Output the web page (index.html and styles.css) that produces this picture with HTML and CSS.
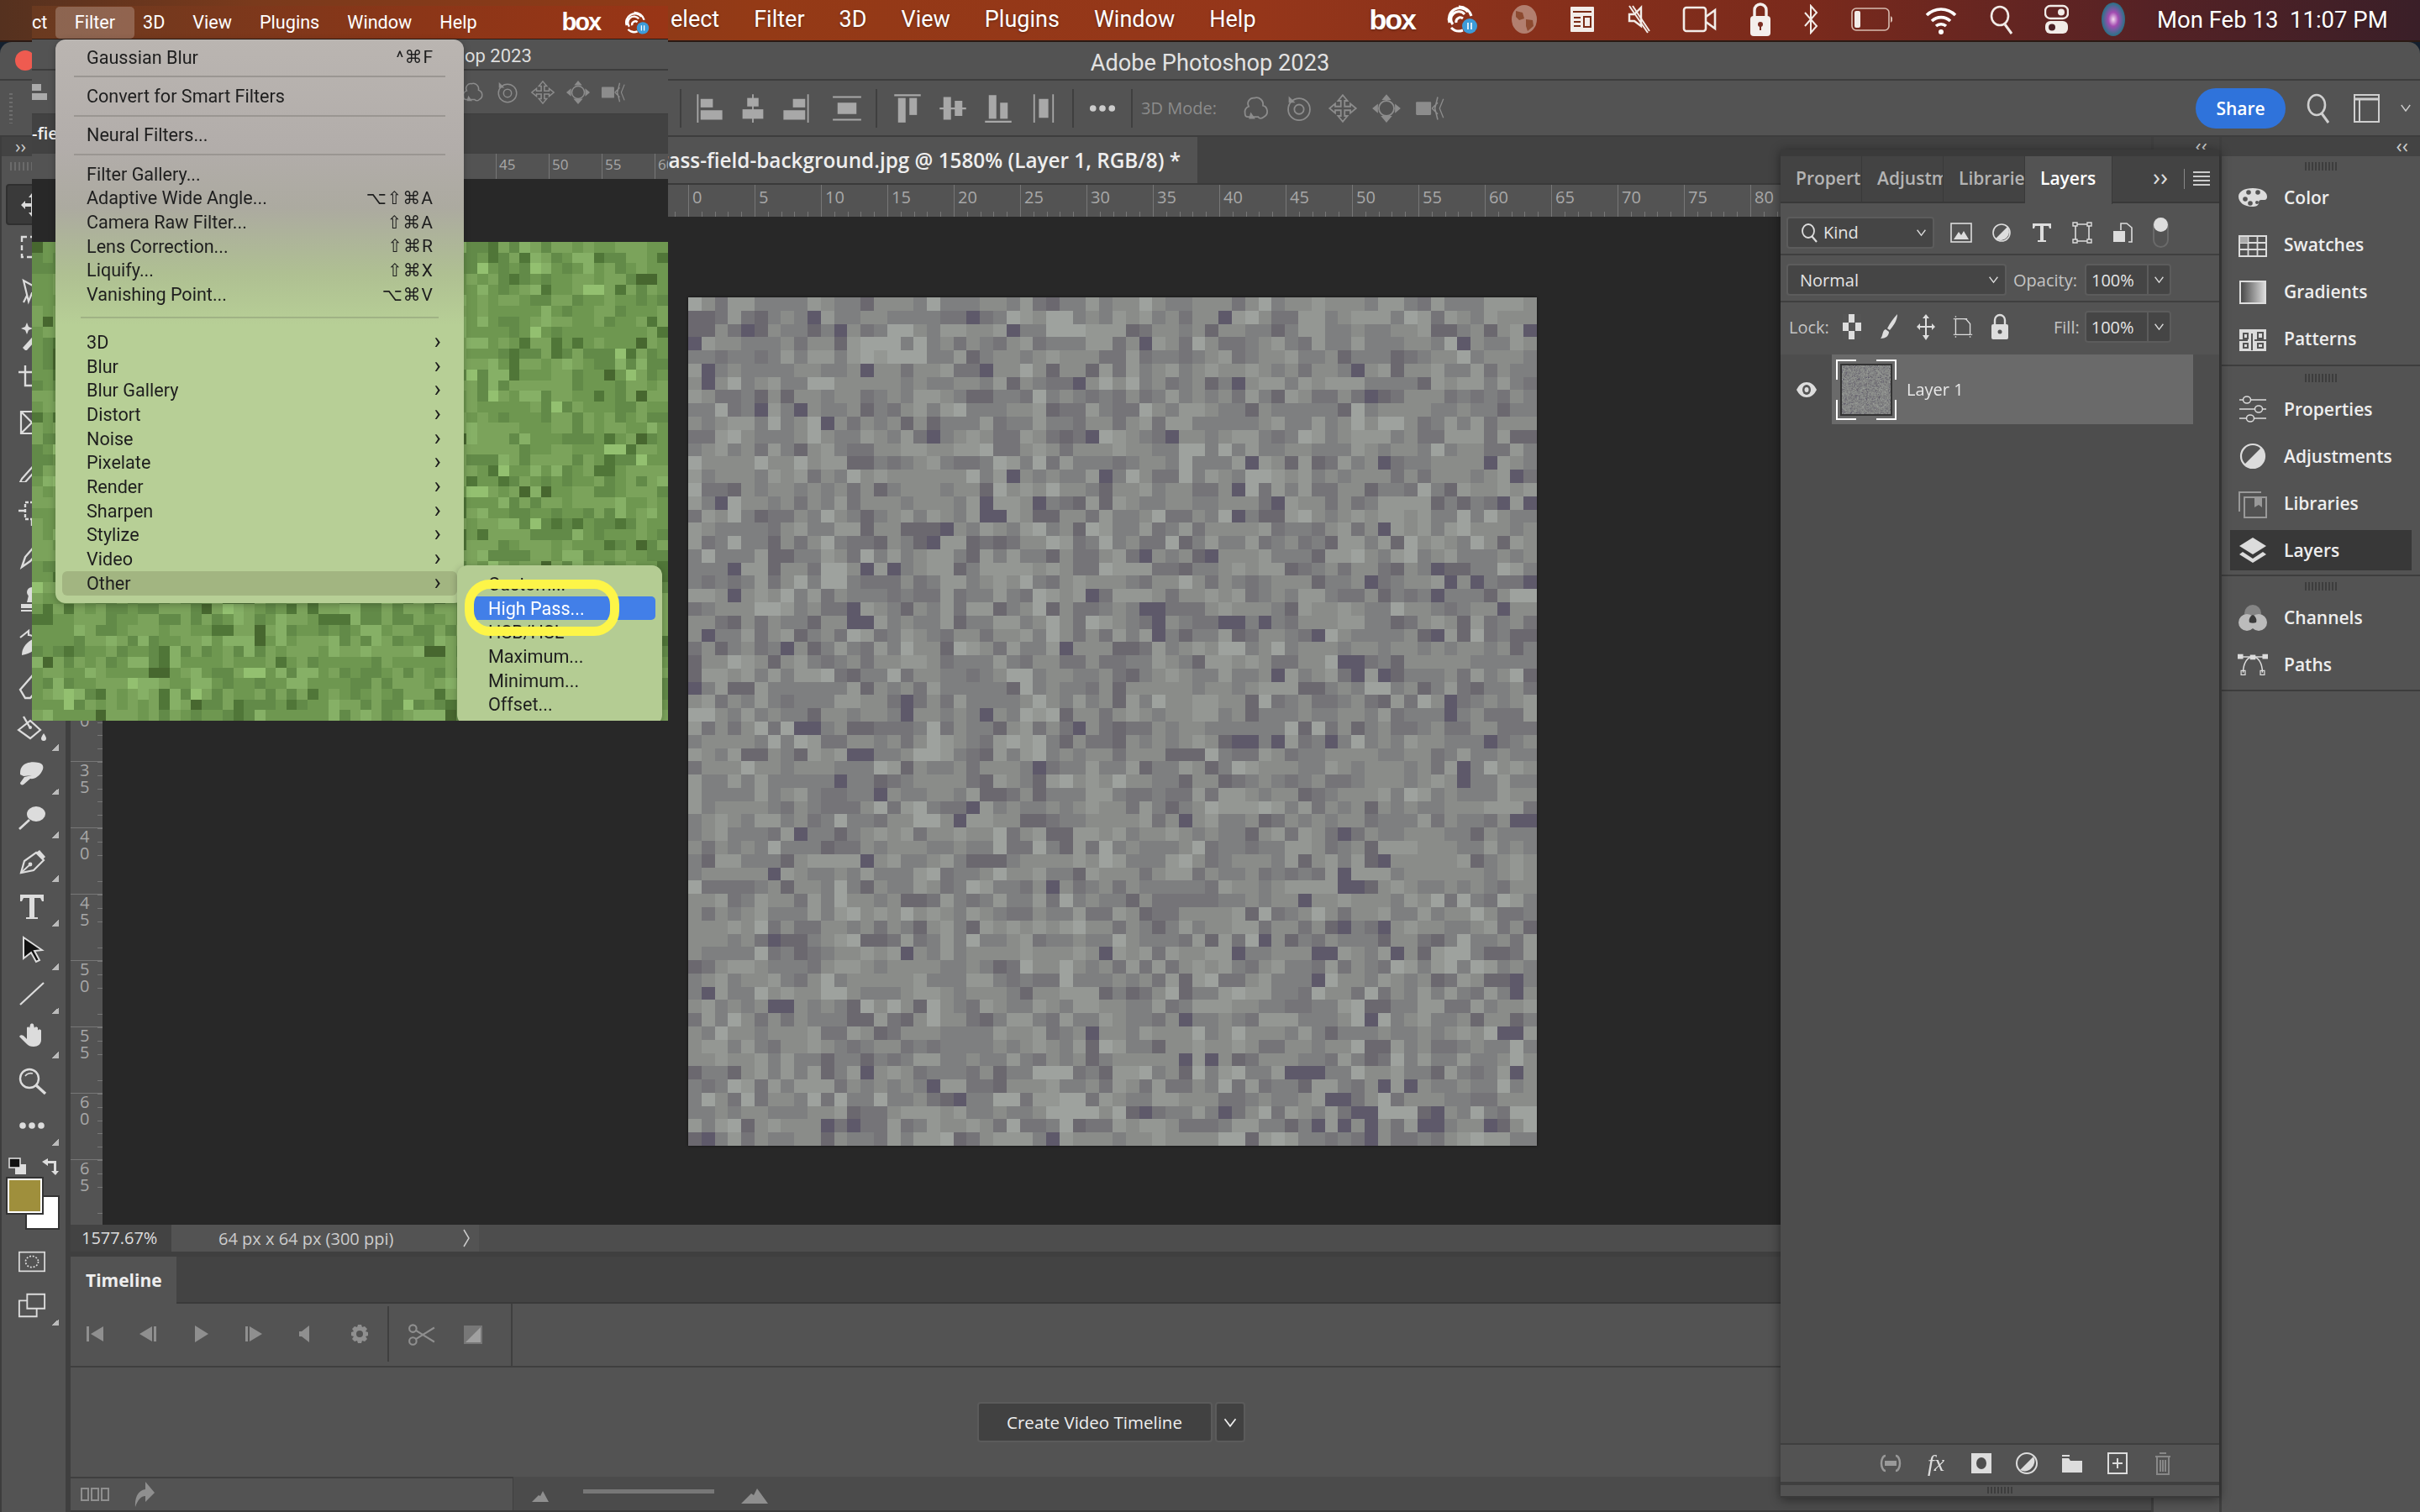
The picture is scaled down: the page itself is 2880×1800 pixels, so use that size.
FILE: index.html
```html
<!DOCTYPE html>
<html lang="en">
<head>
    <meta charset="UTF-8" />
    <title>Adobe Photoshop 2023</title>
    <link rel="stylesheet" href="styles.css">
</head>
<body>
    <svg class="defs">
        <symbol id="chev" viewBox="0 0 16 12"><path d="M2 2l6 8 6-8" fill="none" stroke="currentColor" stroke-width="1.6"/></symbol>
        <symbol id="orbit" viewBox="0 0 32 32"><path d="M15 5a7 7 0 0 1 9 8 6.5 6.5 0 0 1 1 12c-2 2-5 2-6 0H8c-2 0-3-2-3-4a6 6 0 0 1 4-7 6 6 0 0 1 6-9z" fill="none" stroke="currentColor" stroke-width="1.6"/><path d="M9 27l2-7 5 7z" fill="currentColor"/></symbol>
        <symbol id="roll" viewBox="0 0 32 32"><circle cx="16" cy="17" r="11.5" fill="none" stroke="currentColor" stroke-width="1.6"/><circle cx="16" cy="17" r="5" fill="none" stroke="currentColor" stroke-width="1.6"/><path d="M5 3v7h7z" fill="currentColor"/></symbol>
        <symbol id="pan" viewBox="0 0 32 32"><path d="M16 2l5 6h-3v6h6v-3l6 5-6 5v-3h-6v6h3l-5 6-5-6h3v-6H8v3l-6-5 6-5v3h6V8h-3z" fill="none" stroke="currentColor" stroke-width="1.6"/></symbol>
        <symbol id="slide" viewBox="0 0 32 32"><path d="M16 1l5 6H11zM16 31l-6-7h12zM1 16l6-5v10zM31 16l-6-5v10z" fill="currentColor"/><circle cx="16" cy="16" r="8" fill="none" stroke="currentColor" stroke-width="1.6"/></symbol>
        <symbol id="cam3d" viewBox="0 0 32 32"><rect x="1" y="9" width="16" height="14" rx="1" fill="currentColor"/><path d="M18 16l6-6M18 16l6 6M24 4l-3 12 3 12" fill="none" stroke="currentColor" stroke-width="1.4"/><path d="M30 6l-4 10 4 10" fill="none" stroke="currentColor" stroke-width="1.2"/></symbol>
    </svg>

    <div class="menubar">
        <span>elect</span>
        <span>Filter</span>
        <span>3D</span>
        <span>View</span>
        <span>Plugins</span>
        <span>Window</span>
        <span>Help</span>
        <div class="tray">
            <span class="boxlogo">box</span>
            <svg class="tray-sync" viewBox="0 0 40 36"><path d="M6 22a13 13 0 0 1 22-13M10 24a9 9 0 0 1 14-12M17 3a15 15 0 0 1 15 11" fill="none" stroke="#fff" stroke-width="3"/><path d="M14 22a5 5 0 0 1 8-5M8 28c4 4 9 5 14 3" fill="none" stroke="#fff" stroke-width="3"/><circle cx="30" cy="26" r="9" fill="#3d9bd8"/><path d="M28 22v8M32 22v8" stroke="#fff" stroke-width="1.6"/></svg>
            <svg class="tray-globe" viewBox="0 0 32 36"><ellipse cx="16" cy="18" rx="15" ry="17" fill="#c09a8c" opacity=".75"/><path d="M6 8l8 2 2 7-6 2-4-4zM18 18l8 1 1 7-7 6-2-6z" fill="#8c4a30"/></svg>
            <svg class="tray-kb" viewBox="0 0 30 36"><path d="M2 3h26a1 1 0 0 1 1 1v28a1 1 0 0 1-1 1H2a1 1 0 0 1-1-1V4a1 1 0 0 1 1-1z" fill="#f2ece8"/><path d="M4 9h22M5 16h8M5 21h8M5 26h8" stroke="#7a2c16" stroke-width="2"/><path d="M17 15h8v12h-8z" fill="none" stroke="#7a2c16" stroke-width="2"/></svg>
            <svg class="tray-mute" viewBox="0 0 27 36"><path d="M2 12h6l8-8v22l-8-6H2z" fill="none" stroke="#f2ece8" stroke-width="2.4"/><path d="M2 2l22 32M6 2l20 30" stroke="#f2ece8" stroke-width="2"/></svg>
            <svg class="tray-cam" viewBox="0 0 41 36"><rect x="2" y="4" width="26" height="28" rx="3" fill="none" stroke="#f2ece8" stroke-width="2.6"/><path d="M28 15l11-8v22l-11-8" fill="none" stroke="#f2ece8" stroke-width="2.6"/></svg>
            <svg class="tray-lock" viewBox="0 0 26 42"><path d="M6 18v-8a7 7 0 0 1 14 0v8" fill="none" stroke="#f4efec" stroke-width="3.4"/><rect x="1" y="17" width="24" height="24" rx="4" fill="#f4efec"/><circle cx="13" cy="27" r="3" fill="#7a2c20"/><path d="M12 28h2v6h-2z" fill="#7a2c20"/></svg>
            <svg class="tray-bt" viewBox="0 0 18 36"><path d="M2 10l14 16-7 8V2l7 8L2 26" fill="none" stroke="#f2ece8" stroke-width="2"/></svg>
            <svg class="tray-batt" viewBox="0 0 50 36"><rect x="1" y="5" width="44" height="26" rx="5" fill="none" stroke="#d8bcb0" stroke-width="1.6"/><rect x="4" y="8" width="7" height="20" rx="2" fill="#f2ece8"/><path d="M47 14v8l2-2v-4z" fill="#d8bcb0"/></svg>
            <svg class="tray-wifi" viewBox="0 0 38 36"><path d="M2 13a24 24 0 0 1 34 0M8 20a16 16 0 0 1 22 0M13 26a9 9 0 0 1 12 0" fill="none" stroke="#fff" stroke-width="3.6"/><circle cx="19" cy="33" r="3" fill="#fff"/></svg>
            <svg class="tray-search" viewBox="0 0 27 36"><ellipse cx="12" cy="14" rx="10" ry="11" fill="none" stroke="#f2ece8" stroke-width="2.6"/><path d="M18 24l8 11" stroke="#f2ece8" stroke-width="3"/></svg>
            <svg class="tray-ctl" viewBox="0 0 29 36"><rect x="1" y="2" width="27" height="15" rx="6" fill="none" stroke="#f2ece8" stroke-width="2.4"/><circle cx="20" cy="9.5" r="4" fill="#f2ece8"/><rect x="1" y="20" width="27" height="15" rx="6" fill="#f2ece8"/><circle cx="9" cy="27.5" r="4" fill="#4a2024"/></svg>
            <span class="siri"></span>
            <span class="clock">Mon Feb 13&nbsp; 11:07 PM</span>
        </div>
    </div>

    <div class="window">
        <div class="titlebar">
            <span class="light"></span>
            <span class="apptitle">Adobe Photoshop 2023</span>
        </div>

        <div class="optbar">
            <div class="optgrip"></div>
            <div class="optgroup g1">
                <svg class="opt" viewBox="0 0 32 32"><path d="M3 1v30" stroke="currentColor" stroke-width="1.6"/><rect x="6" y="6" width="13" height="9" fill="currentColor"/><rect x="6" y="18" width="23" height="10" fill="currentColor"/></svg>
                <svg class="opt" viewBox="0 0 32 32"><path d="M16 1v30" stroke="currentColor" stroke-width="1.6"/><rect x="10" y="5" width="12" height="9" fill="currentColor"/><rect x="5" y="17" width="22" height="10" fill="currentColor"/></svg>
                <svg class="opt" viewBox="0 0 32 32"><path d="M29 1v30" stroke="currentColor" stroke-width="1.6"/><rect x="13" y="6" width="13" height="9" fill="currentColor"/><rect x="3" y="18" width="23" height="10" fill="currentColor"/></svg>
                <svg class="opt last" viewBox="0 0 32 32"><path d="M1 4h30M1 28h30" stroke="currentColor" stroke-width="1.6"/><rect x="6" y="10" width="20" height="12" fill="currentColor"/></svg>
            </div>
            <div class="optgroup g2">
                <svg class="opt" viewBox="0 0 32 32"><path d="M2 2h28" stroke="currentColor" stroke-width="2"/><rect x="6" y="5" width="8" height="26" fill="currentColor"/><rect x="18" y="5" width="8" height="18" fill="currentColor"/></svg>
                <svg class="opt" viewBox="0 0 32 32"><path d="M2 16h28" stroke="currentColor" stroke-width="2"/><rect x="6" y="4" width="8" height="24" fill="currentColor"/><rect x="18" y="8" width="8" height="16" fill="currentColor"/></svg>
                <svg class="opt" viewBox="0 0 32 32"><path d="M2 30h28" stroke="currentColor" stroke-width="2"/><rect x="6" y="2" width="8" height="25" fill="currentColor"/><rect x="18" y="10" width="8" height="17" fill="currentColor"/></svg>
                <svg class="opt" viewBox="0 0 32 32"><path d="M6 1v30M26 1v30" stroke="currentColor" stroke-width="1.6"/><rect x="11" y="6" width="10" height="20" fill="currentColor"/></svg>
            </div>
            <div class="optgroup g3">
                <svg class="opt dots" viewBox="0 0 32 32"><circle cx="6" cy="16" r="3.4"/><circle cx="16" cy="16" r="3.4"/><circle cx="26" cy="16" r="3.4"/></svg>
            </div>
            <div class="optgroup g4">
                <span class="mode3d">3D Mode:</span>
                <svg class="opt dim"><use href="#orbit"/></svg>
                <svg class="opt dim"><use href="#roll"/></svg>
                <svg class="opt dim"><use href="#pan"/></svg>
                <svg class="opt dim"><use href="#slide"/></svg>
                <svg class="opt dim"><use href="#cam3d"/></svg>
            </div>
            <div class="optright">
                <span class="share">Share</span>
                <svg class="opt-search" viewBox="0 0 27 36"><ellipse cx="12" cy="14" rx="10" ry="12" fill="none" stroke="#cfcfcf" stroke-width="2.6"/><path d="M18 24l8 11" stroke="#cfcfcf" stroke-width="3"/></svg>
                <svg class="opt-work" viewBox="0 0 31 36"><rect x="1" y="2" width="29" height="32" fill="none" stroke="#cfcfcf" stroke-width="2"/><path d="M1 7h29" stroke="#cfcfcf" stroke-width="3"/><path d="M7 8v26" stroke="#cfcfcf" stroke-width="2"/></svg>
                <svg class="opt-chev"><use href="#chev"/></svg>
            </div>
        </div>

        <div class="mainrow">
            <div class="tools">
                <div class="toolhead">››</div>
                <div class="grip"></div>
                <div class="tool on"><svg viewBox="0 0 36 36"><path d="M18 4l4 5h-3v7h7v-3l5 5-5 5v-3h-7v7h3l-4 5-4-5h3v-7h-7v3l-5-5 5-5v3h7V9h-3z"/></svg></div>
                <div class="tool"><svg viewBox="0 0 36 36"><path d="M6 6h24v24H6z" fill="none" stroke="currentColor" stroke-width="2.4" stroke-dasharray="6 4"/></svg></div>
                <div class="tool"><svg viewBox="0 0 36 36"><path d="M8 6l22 12-12 3-4 10zM12 24l-4 8" fill="none" stroke="currentColor" stroke-width="2.2"/></svg></div>
                <div class="tool"><svg viewBox="0 0 36 36"><path d="M7 33l18-20 4 4-18 20z"/><path d="M12 3l2 5 5 2-5 2-2 5-2-5-5-2 5-2z"/></svg></div>
                <div class="tool"><svg viewBox="0 0 36 36"><path d="M10 2v24h24M2 10h24v24" fill="none" stroke="currentColor" stroke-width="2.4"/></svg></div>
                <div class="tool"><svg viewBox="0 0 36 36"><path d="M5 5h26v26H5zM5 5l26 26M31 5L5 31" fill="none" stroke="currentColor" stroke-width="2.2"/></svg></div>
                <div class="tool"><svg viewBox="0 0 36 36"><path d="M6 32l16-18 4 4-16 18-6 0zM24 8l4-4 6 6-4 4z" fill="none" stroke="currentColor" stroke-width="2.2"/></svg></div>
                <div class="tool"><svg viewBox="0 0 36 36"><path d="M10 8h16v20H10z" fill="none" stroke="currentColor" stroke-width="2.4" stroke-dasharray="4 2"/><path d="M2 18h8M18 28v8" stroke="currentColor" stroke-width="2.4"/></svg></div>
                <div class="tool"><svg viewBox="0 0 36 36"><path d="M6 33l4-12 14-16 6 5-14 16z" fill="none" stroke="currentColor" stroke-width="2.4"/></svg></div>
                <div class="tool"><svg viewBox="0 0 36 36"><circle cx="18" cy="10" r="6"/><path d="M14 14h8l2 8H12zM5 24h26v5H5zM5 31h26v2H5z"/></svg></div>
                <div class="tool"><svg viewBox="0 0 36 36"><path d="M6 33c0-10 6-16 18-22l2 6c-2 8-8 14-20 16z"/><path d="M4 12l10-8v5c4 0 6 2 7 4" fill="none" stroke="currentColor" stroke-width="2.2"/></svg></div>
                <div class="tool"><svg viewBox="0 0 36 36"><path d="M4 22L18 6l12 10-14 16H10z" fill="none" stroke="currentColor" stroke-width="2.4"/></svg></div>
                <!-- from here the tools show in full, under the pasted menu -->
                <div class="tool more"><svg viewBox="0 0 36 36"><path d="M2 18L16 7l12 11-12 10z" fill="none" stroke="currentColor" stroke-width="2.2"/><path d="M8 2l7 12" stroke="currentColor" stroke-width="2.4"/><circle cx="16" cy="15" r="2"/><path d="M32 22c2 3 3 5 3 6a3 3 0 0 1-6 0c0-1 1-3 3-6z"/></svg></div>
                <div class="tool more"><svg viewBox="0 0 36 36"><path d="M6 9c3-5 12-7 20-5 5 1 7 5 4 10-3 6-9 10-14 9l-8 7c-2 1-4 0-4-2l5-7 9-2-10 1-4-2c0-4 0-6 2-9z"/></svg></div>
                <div class="tool more"><svg viewBox="0 0 36 36"><ellipse cx="23" cy="13" rx="11" ry="9"/><path d="M15 20L3 31" stroke="currentColor" stroke-width="2.8"/></svg></div>
                <div class="tool more"><svg viewBox="0 0 36 36"><path d="M5 31l4-14L23 7l9 9-12 12z" fill="none" stroke="currentColor" stroke-width="2.2"/><path d="M23 7l4-3 7 8-3 3z"/><path d="M5 31l11-10" stroke="currentColor" stroke-width="1.8"/><circle cx="16" cy="21" r="2.4"/></svg></div>
                <div class="tool more"><svg viewBox="0 0 36 36"><path d="M4 4h28v8h-2l-2-4h-7v23h4v2H11v-2h4V8H8l-2 4H4z"/></svg></div>
                <div class="tool more"><svg viewBox="0 0 36 36"><path d="M8 3l22 15-9 1 6 11-4 2-6-11-9 7z" fill="#111" stroke="#ddd" stroke-width="2"/></svg></div>
                <div class="tool more"><svg viewBox="0 0 36 36"><path d="M4 31L32 5" stroke="currentColor" stroke-width="2.2"/></svg></div>
                <div class="tool more"><svg viewBox="0 0 36 36"><path d="M12 26L3 17c1-2 3-2 5-1l4 4 0-13c0-2 3-2 3 0l1-4c0-2 4-2 4 0l1 4c0-2 4-2 4 0v3c0-2 4-2 4 0v11c0 5-4 8-9 8-4 0-6-1-8-3z"/></svg></div>
                <div class="tool"><svg viewBox="0 0 36 36"><circle cx="15" cy="14" r="11" fill="none" stroke="currentColor" stroke-width="2.4"/><path d="M10 11c2-3 6-4 9-3" fill="none" stroke="currentColor" stroke-width="1.6"/><path d="M23 22l11 10" stroke="currentColor" stroke-width="3.4"/></svg></div>
                <div class="tool more"><svg viewBox="0 0 36 36"><circle cx="7" cy="18" r="3.8"/><circle cx="18" cy="18" r="3.8"/><circle cx="29" cy="18" r="3.8"/></svg></div>
                <div class="colors-mini">
                    <svg viewBox="0 0 22 22" class="mini-default"><rect x="8" y="9" width="13" height="12" fill="#ddd"/><rect x="1" y="2" width="13" height="11" fill="#111" stroke="#ddd" stroke-width="1.6"/></svg>
                    <svg viewBox="0 0 22 22" class="mini-swap"><path d="M2 6l7-4v3h10v12h3l-4 5-5-5h3V8H9v3z" fill="#ddd"/></svg>
                </div>
                <div class="swatches">
                    <span class="bgcolor"></span>
                    <span class="fgcolor"></span>
                </div>
                <div class="tool short"><svg viewBox="0 0 36 36" class="wide"><rect x="2" y="6" width="32" height="24" fill="none" stroke="currentColor" stroke-width="1.8"/><ellipse cx="18" cy="18" rx="8" ry="7" fill="none" stroke="currentColor" stroke-width="1.8" stroke-dasharray="2 2"/></svg></div>
                <div class="tool short more"><svg viewBox="0 0 36 36" class="wide"><path d="M12 4h22v18H12z" fill="none" stroke="currentColor" stroke-width="2"/><path d="M12 12H2v20h22v-10" fill="none" stroke="currentColor" stroke-width="2"/></svg></div>
            </div>

            <div class="center">
                <div class="tabbar">
                    <div class="doctab">grass-field-background.jpg @ 1580% (Layer 1, RGB/8) *</div>
                </div>
                <div class="hruler">
                    <span>0</span><span>5</span><span>10</span><span>15</span><span>20</span><span>25</span><span>30</span><span>35</span><span>40</span><span>45</span><span>50</span><span>55</span><span>60</span><span>65</span><span>70</span><span>75</span><span>80</span>
                </div>
                <div class="workspace">
                    <div class="vruler">
                        <span>0</span><span>5</span><span>1<br>0</span><span>1<br>5</span><span>2<br>0</span><span>2<br>5</span><span>3<br>0</span><span>3<br>5</span><span>4<br>0</span><span>4<br>5</span><span>5<br>0</span><span>5<br>5</span><span>6<br>0</span><span>6<br>5</span>
                    </div>
                    <div class="pasteboard">
                        <canvas class="image" id="image" width="64" height="64"></canvas>
                    </div>
                </div>
                <div class="statusbar">
                    <span class="zoomval">1577.67%</span>
                    <div class="docinfo">
                        <span>64 px x 64 px (300 ppi)</span>
                        <svg viewBox="0 0 10 24"><path d="M2 2l6 10-6 10" fill="none" stroke="#ccc" stroke-width="1.5"/></svg>
                    </div>
                </div>
                <div class="timeline">
                    <div class="tl-tabs"><span class="tl-tab">Timeline</span></div>
                    <div class="tl-controls">
                        <div class="tl-group">
                            <svg viewBox="0 0 24 24"><path d="M2 3h3v18H2zM22 3v18L7 12z"/></svg>
                            <svg viewBox="0 0 24 24"><path d="M17 3v18L2 12zM19 3h3v18h-3z"/></svg>
                            <svg viewBox="0 0 24 24"><path d="M5 2l16 10L5 22z"/></svg>
                            <svg viewBox="0 0 24 24"><path d="M2 3h3v18H2zM7 3l15 9-15 9z"/></svg>
                            <svg viewBox="0 0 24 24"><path d="M6 9l9-7v20l-9-7H3V9z"/></svg>
                            <svg viewBox="0 0 24 24"><path d="M10 1h4l1 3 3-1 3 3-2 3 3 1v4l-3 1 2 3-3 3-3-1-1 3h-4l-1-3-3 1-3-3 2-3-3-1v-4l3-1-2-3 3-3 3 1zM12 8a4 4 0 1 0 0 8 4 4 0 0 0 0-8z" fill-rule="evenodd"/></svg>
                        </div>
                        <div class="tl-group second">
                            <svg viewBox="0 0 32 24"><circle cx="6" cy="5" r="4" fill="none" stroke="currentColor" stroke-width="2"/><circle cx="6" cy="19" r="4" fill="none" stroke="currentColor" stroke-width="2"/><path d="M9 7l21 13M9 17L30 4" stroke="currentColor" stroke-width="2"/></svg>
                            <svg viewBox="0 0 24 24"><path d="M1 1h22v22H1z" fill="#777"/><path d="M21 3v18H3z" fill="#a0a0a0"/></svg>
                        </div>
                    </div>
                    <div class="tl-body">
                        <span class="tl-button">Create Video Timeline</span>
                        <span class="tl-arrow"><svg><use href="#chev"/></svg></span>
                    </div>
                    <div class="tl-footer">
                        <div class="tl-foot-left">
                            <span class="framebox"></span><span class="framebox"></span><span class="framebox"></span>
                            <svg class="tl-share" viewBox="0 0 26 32"><path d="M14 1l11 13-11 11v-7C9 18 5 22 2 31c-1-12 4-20 12-21z"/></svg>
                        </div>
                        <div class="tl-foot-right">
                            <svg class="mount small" viewBox="0 0 20 14"><path d="M0 14L8 6l2 1 3-6 7 13z"/></svg>
                            <span class="slider"></span>
                            <svg class="mount big" viewBox="0 0 32 18"><path d="M0 18L12 6l3 2 4-8 13 18z"/></svg>
                        </div>
                    </div>
                </div>
            </div>

            <div class="dockmid">
                <div class="dockhead">‹‹</div>
            </div>

            <div class="dock">
                <div class="dockhead">‹‹</div>
                <div class="dockgroup g-a">
                    <div class="grip short"></div>
                    <div class="dockitem"><svg viewBox="0 0 36 36"><path d="M18 7c10 0 17 4 17 10 0 5-4 4-7 4-2 0-3 1-3 3 0 4-3 5-8 5C8 29 1 24 1 17 1 11 8 7 18 7z"/><g fill="#535353"><circle cx="9" cy="20" r="2.8"/><circle cx="15" cy="25" r="2.8"/><circle cx="24" cy="12" r="2.8"/><circle cx="13" cy="12" r="2.8"/><circle cx="23" cy="24" r="2"/></g></svg><span>Color</span></div>
                    <div class="dockitem"><svg viewBox="0 0 36 36"><path d="M2 8h32v24H2z" fill="none" stroke="currentColor" stroke-width="2"/><path d="M12.5 8v24M23.5 8v24M2 16h32M2 24h32" stroke="currentColor" stroke-width="1.8"/><rect x="3" y="9" width="9" height="7" fill="#aaa"/></svg><span>Swatches</span></div>
                    <div class="dockitem"><svg viewBox="0 0 36 36"><defs><linearGradient id="grad"><stop offset="0" stop-color="#444"/><stop offset="1" stop-color="#ddd"/></linearGradient></defs><rect x="3" y="6" width="30" height="26" fill="url(#grad)" stroke="#ddd" stroke-width="2"/></svg><span>Gradients</span></div>
                    <div class="dockitem"><svg viewBox="0 0 36 36"><rect x="2" y="7" width="32" height="26"/><path d="M7 12h5v6H7zM17 12v20M24 11h6v7h-6zM7 24h5v5H7zM24 24h6v5h-6zM2 20h10M20 20h14" stroke="#535353" stroke-width="2" fill="none"/></svg><span>Patterns</span></div>
                </div>
                <div class="dockgroup g-b">
                    <div class="grip short"></div>
                    <div class="dockitem"><svg viewBox="0 0 36 36"><path d="M2 7h32M2 18h32M2 29h32" stroke="currentColor" stroke-width="1.5"/><g fill="#535353" stroke="currentColor" stroke-width="1.5"><ellipse cx="11" cy="7" rx="4.5" ry="4"/><ellipse cx="25" cy="18" rx="4.5" ry="4"/><ellipse cx="15" cy="29" rx="4.5" ry="4"/></g></svg><span>Properties</span></div>
                    <div class="dockitem"><svg viewBox="0 0 36 36"><circle cx="18" cy="18" r="14" fill="none" stroke="currentColor" stroke-width="2.2"/><path d="M28 8a14 14 0 0 1-20 20z"/></svg><span>Adjustments</span></div>
                    <div class="dockitem dimicon"><svg viewBox="0 0 36 36"><path d="M2 28V5h26M8 11h26v24H8z" fill="none" stroke="currentColor" stroke-width="2"/><path d="M20 11h9v12l-4-3-5 3z"/></svg><span>Libraries</span></div>
                    <div class="dockitem active"><svg viewBox="0 0 36 36"><path d="M18 3l16 10-16 10L2 13z"/><path d="M6 20l12 8 12-8 4 3-16 10L2 23z"/></svg><span>Layers</span></div>
                </div>
                <div class="dockgroup g-c">
                    <div class="grip short"></div>
                    <div class="dockitem"><svg viewBox="0 0 36 36"><circle cx="18" cy="13" r="10" fill="#858585"/><circle cx="11" cy="24" r="10" fill="#bbb"/><circle cx="25" cy="24" r="10" fill="#bbb"/><path d="M18 15c4 2 5 6 4 9a12 12 0 0 1-8 0c-1-3 0-7 4-9z" fill="#3a3a3a"/></svg><span>Channels</span></div>
                    <div class="dockitem"><svg viewBox="0 0 44 36"><path d="M8 30C8 16 14 7 22 7s14 9 14 23" fill="none" stroke="currentColor" stroke-width="1.8"/><path d="M4 7h36" stroke="currentColor" stroke-width="1.8"/><rect x="0" y="3" width="8" height="7"/><rect x="18" y="4" width="8" height="7"/><rect x="36" y="3" width="8" height="7"/><path d="M5 27h6v6H5zM33 27h6v6h-6z" fill="none" stroke="currentColor" stroke-width="1.5"/></svg><span>Paths</span></div>
                </div>
            </div>
        </div>
    </div>

    <!-- floating layers panel -->
    <div class="layers">
        <div class="layers-top"></div>
        <div class="layers-tabs">
            <span class="ltab">Properties</span>
            <span class="ltab">Adjustments</span>
            <span class="ltab">Libraries</span>
            <span class="ltab cur">Layers</span>
            <div class="ltab-end">
                <span class="more-tabs">››</span>
                <span class="ltab-bar"></span>
                <svg viewBox="0 0 20 20"><path d="M0 2h20M0 7h20M0 12h20M0 17h20" stroke="#ccc" stroke-width="2"/></svg>
            </div>
        </div>
        <div class="lrow r1">
            <div class="field kind">
                <svg class="kind-icon" viewBox="0 0 20 24"><ellipse cx="9" cy="10" rx="7" ry="8" fill="none" stroke="#ddd" stroke-width="1.8"/><path d="M13 16l6 7" stroke="#ddd" stroke-width="2.2"/></svg>
                <span>Kind</span>
                <svg class="fchev"><use href="#chev"/></svg>
            </div>
            <svg class="lic" viewBox="0 0 26 26"><rect x="1" y="2" width="24" height="22" fill="none" stroke="#ddd" stroke-width="1.6"/><path d="M4 21l6-9 3 4 3-5 6 10z" fill="#ddd"/></svg>
            <svg class="lic" viewBox="0 0 26 26"><circle cx="13" cy="13" r="10" fill="none" stroke="#ddd" stroke-width="1.6"/><path d="M20 6a10 10 0 0 1-14 14z" fill="#ddd"/></svg>
            <svg class="lic" viewBox="0 0 26 26"><path d="M2 2h22v6h-2l-1-3h-6v17h3v2H8v-2h3V5H5L4 8H2z" fill="#ddd"/></svg>
            <svg class="lic" viewBox="0 0 26 26"><path d="M5 3h16v20H5z" fill="none" stroke="#ddd" stroke-width="1.6"/><path d="M2 1h5v4H2zM19 1h5v4h-5zM2 21h5v4H2zM19 21h5v4h-5z" fill="#535353" stroke="#ddd" stroke-width="1.4"/></svg>
            <svg class="lic" viewBox="0 0 26 26"><path d="M11 10V2h7l6 5v17h-4" fill="none" stroke="#ddd" stroke-width="1.6"/><rect x="2" y="11" width="14" height="13" fill="#ddd"/></svg>
            <span class="filter-toggle"><span></span></span>
        </div>
        <div class="lrow r2">
            <div class="field blend"><span>Normal</span><svg class="fchev"><use href="#chev"/></svg></div>
            <span class="lab">Opacity:</span>
            <div class="field pct"><span>100%</span><i><svg class="fchev"><use href="#chev"/></svg></i></div>
        </div>
        <div class="lrow r3">
            <span class="lab lock">Lock:</span>
            <svg class="lk" viewBox="0 0 24 32"><rect x="1" y="1" width="22" height="30" fill="#ddd"/><path d="M1 1h7v10H1zM15 1h8v10h-8zM8 11h8v10H8zM1 21h7v10H1zM15 21h8v10h-8z" fill="#555"/></svg>
            <svg class="lk" viewBox="0 0 24 32"><path d="M22 1c0 7-4 13-9 19l-3-2C13 12 17 6 22 1zM8 19l4 3c0 5-4 8-10 8 3-3 2-10 6-11z" fill="#ddd"/></svg>
            <svg class="lk" viewBox="0 0 24 32"><path d="M12 1l4 5h-3v9h6v-3l4 4-4 4v-3h-6v9h3l-4 6-4-6h3v-9H5v3l-4-4 4-4v3h6V6H8z" fill="#ddd"/></svg>
            <svg class="lk" viewBox="0 0 28 32"><path d="M4 5h14l6 7v15H4z" fill="none" stroke="#ddd" stroke-width="1.6"/><path d="M16 5h4M1 5h2M1 27h2M25 27h2M4 1v2M4 29v2M24 29v2" stroke="#ddd" stroke-width="1.6"/></svg>
            <svg class="lk" viewBox="0 0 24 32"><path d="M6 14V8a6 6 0 0 1 12 0v6" fill="none" stroke="#ddd" stroke-width="2.4"/><rect x="2" y="13" width="20" height="18" rx="2" fill="#ddd"/><circle cx="12" cy="22" r="2.5" fill="#555"/></svg>
            <span class="lab fill">Fill:</span>
            <div class="field pct"><span>100%</span><i><svg class="fchev"><use href="#chev"/></svg></i></div>
        </div>
        <div class="layerlist">
            <div class="layerrow">
                <svg class="eye" viewBox="0 0 26 24"><path d="M1 12c3-6 7-9 12-9s9 3 12 9c-3 6-7 9-12 9S4 18 1 12z" fill="#ddd"/><ellipse cx="13" cy="12" rx="5" ry="6" fill="#555"/><ellipse cx="13" cy="12" rx="2.5" ry="3" fill="#ddd"/></svg>
                <div class="thumb">
                    <canvas id="thumb" width="62" height="62"></canvas>
                </div>
                <span class="layername">Layer 1</span>
            </div>
        </div>
        <div class="layers-foot">
            <svg viewBox="0 0 30 30"><path d="M9 6a5 9 0 0 0 0 18M21 6a5 9 0 0 1 0 18" fill="none" stroke="#999" stroke-width="2.5"/><rect x="8" y="12" width="14" height="6" fill="#999"/></svg>
            <span class="fx">fx</span>
            <svg viewBox="0 0 30 30"><rect x="3" y="3" width="24" height="24" fill="#ddd"/><ellipse cx="15" cy="15" rx="6" ry="7" fill="#4d4d4d"/></svg>
            <svg viewBox="0 0 30 30"><circle cx="15" cy="15" r="12" fill="none" stroke="#ddd" stroke-width="2"/><path d="M23 7a12 12 0 0 1-16 16z" fill="#ddd"/></svg>
            <svg viewBox="0 0 30 30"><path d="M3 9h8l2 3h14v14H3z" fill="#ddd"/><path d="M3 5h9v2H3z" fill="#ddd"/></svg>
            <svg viewBox="0 0 30 30"><path d="M4 3h22v24H4z" fill="none" stroke="#ddd" stroke-width="2"/><path d="M15 9v12M9 15h12" stroke="#ddd" stroke-width="2"/></svg>
            <svg viewBox="0 0 30 30"><path d="M6 7h18M11 3h8M8 8v20h14V8M12 11v14M15 11v14M18 11v14" fill="none" stroke="#888" stroke-width="2"/></svg>
        </div>
        <div class="layers-grip"><div class="grip short"></div></div>
    </div>

    <!-- the filter menu is a crop pasted over the left of the shot -->
    <div class="paste">
        <div class="p-menubar">
            <span class="p-ct">ct</span>
            <span class="p-filter">Filter</span>
            <span>3D</span>
            <span>View</span>
            <span>Plugins</span>
            <span>Window</span>
            <span>Help</span>
            <span class="boxlogo small">box</span>
            <svg class="p-sync" viewBox="0 0 40 36"><path d="M6 22a13 13 0 0 1 22-13M10 24a9 9 0 0 1 14-12M17 3a15 15 0 0 1 15 11" fill="none" stroke="#fff" stroke-width="3"/><path d="M14 22a5 5 0 0 1 8-5M8 28c4 4 9 5 14 3" fill="none" stroke="#fff" stroke-width="3"/><circle cx="30" cy="26" r="9" fill="#3d9bd8"/><path d="M28 22v8M32 22v8" stroke="#fff" stroke-width="1.6"/></svg>
        </div>
        <div class="p-title"><span>op 2023</span></div>
        <div class="p-opts">
            <svg class="p-first" viewBox="0 0 18 24"><rect x="0" y="2" width="11" height="8" fill="#aaa"/><rect x="0" y="13" width="18" height="8" fill="#aaa"/></svg>
            <div class="p-icons">
                <svg><use href="#orbit"/></svg>
                <svg><use href="#roll"/></svg>
                <svg><use href="#pan"/></svg>
                <svg><use href="#slide"/></svg>
                <svg><use href="#cam3d"/></svg>
            </div>
        </div>
        <div class="p-tabs"><span>-field</span></div>
        <div class="p-ruler"><span>45</span><span>50</span><span>55</span><span>60</span></div>
        <div class="p-dark"></div>
        <canvas class="grass" id="grass" width="60" height="45"></canvas>

        <div class="menu">
            <div class="mi"><span>Gaussian Blur</span><kbd>^⌘F</kbd></div>
            <hr>
            <div class="mi"><span>Convert for Smart Filters</span></div>
            <hr>
            <div class="mi"><span>Neural Filters...</span></div>
            <hr>
            <div class="mi"><span>Filter Gallery...</span></div>
            <div class="mi"><span>Adaptive Wide Angle...</span><kbd>⌥⇧⌘A</kbd></div>
            <div class="mi"><span>Camera Raw Filter...</span><kbd>⇧⌘A</kbd></div>
            <div class="mi"><span>Lens Correction...</span><kbd>⇧⌘R</kbd></div>
            <div class="mi"><span>Liquify...</span><kbd>⇧⌘X</kbd></div>
            <div class="mi"><span>Vanishing Point...</span><kbd>⌥⌘V</kbd></div>
            <hr class="wide-sep">
            <div class="mi sub"><span>3D</span><b>›</b></div>
            <div class="mi sub"><span>Blur</span><b>›</b></div>
            <div class="mi sub"><span>Blur Gallery</span><b>›</b></div>
            <div class="mi sub"><span>Distort</span><b>›</b></div>
            <div class="mi sub"><span>Noise</span><b>›</b></div>
            <div class="mi sub"><span>Pixelate</span><b>›</b></div>
            <div class="mi sub"><span>Render</span><b>›</b></div>
            <div class="mi sub"><span>Sharpen</span><b>›</b></div>
            <div class="mi sub"><span>Stylize</span><b>›</b></div>
            <div class="mi sub"><span>Video</span><b>›</b></div>
            <div class="mi sub open"><span>Other</span><b>›</b></div>
        </div>

        <div class="submenu">
            <div class="si">Custom...</div>
            <div class="si hot">High Pass...</div>
            <div class="si">HSB/HSL</div>
            <div class="si">Maximum...</div>
            <div class="si">Minimum...</div>
            <div class="si">Offset...</div>
        </div>
        <div class="ring"></div>
    </div>

    <script src="script.js"></script>
</body>
</html>
```

FILE: styles.css
```css
* {
    box-sizing: border-box;
}

html, body {
    margin: 0;
    width: 2880px;
    height: 1800px;
    overflow: hidden;
}

body {
    position: relative;
    background: #14202e;
    font-family: "Open Sans", "Liberation Sans", sans-serif;
    color: #ddd;
    display: flex;
    flex-direction: column;
}

.defs {
    display: none;
}

/* top menu bar */
.menubar {
    height: 50px;
    flex: none;
    display: flex;
    align-items: center;
    gap: 41px;
    padding-left: 798px;
    padding-bottom: 2px;
    border-bottom: 2px solid #2b1a14;
    background: linear-gradient(90deg, #55311f 0, #7a3a1c 300px, #943a16 900px, #95361a 1500px, #7a2a1c 2150px, #562225 2550px, #3a1f28 2880px);
    font-family: Roboto, sans-serif;
    font-size: 27px;
    color: #fff;
    text-shadow: 0 1px 3px rgba(0, 0, 0, 0.35);
}

.tray {
    margin-left: auto;
    margin-right: 38px;
    display: flex;
    align-items: center;
    gap: 38.5px;
    height: 44px;
}

.boxlogo {
    width: 51px;
    font-family: "Liberation Sans", sans-serif;
    font-weight: bold;
    font-size: 34px;
    letter-spacing: -2px;
    line-height: 1;
}
.boxlogo.small {
    width: 42px;
    font-size: 29px;
    margin-left: 68px;
}

.tray svg {
    height: 36px;
    flex: none;
}
.tray-sync { width: 40px; }
.tray-globe { width: 32px; }
.tray-kb { width: 30px; }
.tray-mute { width: 27px; }
.tray-cam { width: 41px; }
.tray .tray-lock { width: 26px; height: 42px; }
.tray-bt { width: 18px; }
.tray-batt { width: 50px; }
.tray-wifi { width: 38px; }
.tray-search { width: 27px; }
.tray-ctl { width: 29px; }

.siri {
    width: 28px;
    height: 40px;
    border-radius: 50%;
    background: radial-gradient(ellipse at 50% 50%, #f3d9ef 0, #a24bb0 30%, #35708c 65%, #2a4a50 100%);
}

.clock {
    width: 275px;
    white-space: nowrap;
    font-size: 27.5px;
}

/* window */
.window {
    flex: 1;
    min-height: 0;
    display: flex;
    flex-direction: column;
    background: #535353;
    border-radius: 14px 14px 0 0;
    overflow: hidden;
}

.titlebar {
    height: 46px;
    flex: none;
    display: grid;
    grid-template-columns: 1fr auto 1fr;
    align-items: center;
    padding-top: 6px;
    border-bottom: 2px solid #3d3d3d;
}
.light {
    width: 24px;
    height: 24px;
    margin: -6px 0 0 18px;
    border-radius: 50%;
    background: #ef5b50;
}
.apptitle {
    font-family: Roboto, sans-serif;
    font-size: 27.2px;
    color: #e2e2e2;
}

.optbar {
    height: 67px;
    flex: none;
    display: flex;
    align-items: center;
    border-bottom: 2px solid #3d3d3d;
    color: #a8a8a8;
}
.optgrip {
    width: 4px;
    height: 36px;
    margin-left: 11px;
    margin-right: 794px;
    background: repeating-linear-gradient(180deg, #6d6d6d 0 2px, transparent 2px 5px);
}
.optgroup {
    height: 46px;
    display: flex;
    align-items: center;
    border-left: 2px solid #3f3f3f;
}
.g1 { padding-left: 16px; gap: 15px; padding-right: 16px; }
.g1 .last { margin-left: 10px; }
.g2 { padding-left: 18px; gap: 18px; padding-right: 16px; }
.g3 { padding: 0 16px; }
.g4 { padding-left: 10px; gap: 16px; }
.opt {
    width: 36px;
    height: 36px;
    flex: none;
}
.dots {
    fill: #ccc;
}
.dim {
    color: #8c8c8c;
}
.mode3d {
    width: 100px;
    margin-right: 2px;
    font-size: 20px;
    color: #8c8c8c;
    white-space: nowrap;
}
.optright {
    margin-left: auto;
    display: flex;
    align-items: center;
    padding-right: 10px;
}
.share {
    width: 107px;
    height: 48px;
    border-radius: 24px;
    background: #2f73db;
    color: #fff;
    font-size: 21px;
    font-weight: 600;
    display: flex;
    justify-content: center;
    align-items: center;
}
.opt-search {
    width: 27px;
    height: 36px;
    margin-left: 25px;
}
.opt-work {
    width: 31px;
    height: 36px;
    margin-left: 29px;
}
.opt-chev {
    width: 14px;
    height: 11px;
    margin-left: 24px;
    color: #ccc;
}

.mainrow {
    flex: 1;
    min-height: 0;
    display: flex;
}

/* tools */
.tools {
    width: 84px;
    flex: none;
    display: flex;
    flex-direction: column;
    background: #535353;
    border-left: 2px solid #3d3d3d;
    border-right: 6px solid #3f3f3f;
}
.toolhead {
    height: 23px;
    background: #434343;
    padding-left: 16px;
    font-size: 22px;
    line-height: 20px;
    color: #ccc;
}
.grip {
    height: 10px;
    background: repeating-linear-gradient(90deg, #6b6b6b 0 2px, transparent 2px 5px);
}
.tools > .grip {
    margin: 7px 10px 13px;
    width: 30px;
}
.grip.short {
    width: 38px;
    height: 10px;
    margin: 0 auto;
    background: repeating-linear-gradient(90deg, #3d3d3d 0 2px, transparent 2px 4px);
}
.tool {
    height: 52.3px;
    flex: none;
    display: flex;
    justify-content: center;
    align-items: center;
    position: relative;
    padding-right: 4px;
}
.tool svg {
    width: 36px;
    height: 36px;
    fill: currentColor;
    color: #dcdcdc;
}
.tool.on {
    margin: 3px 0 0 5px;
    height: 49px;
    background: #3a3a3a;
    border: 2px solid #2f2f2f;
    border-radius: 4px 0 0 4px;
    padding-right: 9px;
}
.tool.more::after {
    content: "";
    position: absolute;
    right: 8px;
    bottom: 2px;
    width: 8px;
    height: 8px;
    background: linear-gradient(135deg, transparent 50%, #bbb 50%);
}
.tool.short {
    height: 52px;
}
.tool svg.wide {
    width: 34px;
    height: 34px;
    fill: none;
}
.colors-mini {
    height: 30px;
    margin-top: 7px;
    padding: 0 8px;
    display: flex;
    justify-content: space-between;
    align-items: center;
}
.mini-default,
.mini-swap {
    width: 22px;
    height: 22px;
}
.swatches {
    height: 62px;
    flex: none;
    position: relative;
    margin-bottom: 11px;
}
.bgcolor {
    position: absolute;
    left: 28px;
    top: 20px;
    width: 41px;
    height: 41px;
    background: #fff;
    border: 2px solid #333;
}
.fgcolor {
    position: absolute;
    left: 7px;
    top: 0;
    width: 41px;
    height: 41px;
    background: #9f8f3c;
    border: 2px solid #fff;
    outline: 2px solid #333;
}

/* centre column */
.center {
    flex: 1;
    min-width: 0;
    display: flex;
    flex-direction: column;
}
.tabbar {
    height: 57px;
    flex: none;
    background: #424242;
    border-bottom: 2px solid #3a3a3a;
}
.doctab {
    width: 1341px;
    height: 55px;
    background: #535353;
    display: flex;
    justify-content: flex-end;
    align-items: center;
    padding-right: 20px;
    font-size: 24.3px;
    font-weight: 600;
    color: #eee;
    white-space: nowrap;
    overflow: hidden;
}

.hruler {
    height: 38px;
    flex: none;
    display: flex;
    padding-left: 735px;
    overflow: hidden;
    background: repeating-linear-gradient(90deg, transparent 0 8.2px, #777 8.2px 9.2px, transparent 9.2px 15.8px) 0 100% / 100% 6px no-repeat;
}
.hruler span {
    width: 79px;
    flex: none;
    border-left: 1px solid #777;
    padding-left: 4px;
    font-size: 20px;
    line-height: 30px;
    color: #a8a8a8;
}

.workspace {
    flex: 1;
    min-height: 0;
    display: flex;
    overflow: hidden;
}
.vruler {
    width: 38px;
    flex: none;
    padding-top: 95px;
    background: repeating-linear-gradient(180deg, transparent 0 1.1px, #777 1.1px 2.1px, transparent 2.1px 15.8px) 100% 95px / 6px 100% no-repeat;
}
.vruler span {
    display: block;
    height: 79px;
    border-top: 1px solid #777;
    padding-left: 11px;
    font-size: 20px;
    line-height: 20px;
    color: #a8a8a8;
}
.pasteboard {
    flex: 1;
    background: #282828;
    padding: 96px 0 0 697px;
}
.image {
    display: block;
    width: 1010px;
    height: 1010px;
    image-rendering: pixelated;
    box-shadow: 0 0 3px rgba(0, 0, 0, 0.6);
}

.statusbar {
    height: 38px;
    flex: none;
    display: flex;
    background: #4d4d4d;
    border-bottom: 6px solid #3f3f3f;
    font-size: 20px;
    color: #ccc;
}
.zoomval {
    width: 120px;
    padding-left: 13px;
    line-height: 32px;
    background: #434343;
    color: #ddd;
}
.docinfo {
    width: 366px;
    padding: 0 10px 0 56px;
    background: #535353;
    display: flex;
    justify-content: space-between;
    align-items: center;
}
.docinfo svg {
    width: 10px;
    height: 24px;
}

/* timeline */
.timeline {
    height: 304px;
    flex: none;
    display: flex;
    flex-direction: column;
}
.tl-tabs {
    height: 56px;
    flex: none;
    background: #434343;
    border-bottom: 2px solid #3a3a3a;
}
.tl-tab {
    display: flex;
    align-items: center;
    width: 126px;
    height: 56px;
    background: #535353;
    padding-left: 18px;
    font-size: 21px;
    font-weight: 700;
    color: #eee;
}
.tl-controls {
    height: 76px;
    flex: none;
    display: flex;
    border-bottom: 2px solid #3f3f3f;
    color: #8f8f8f;
}
.tl-group {
    display: flex;
    align-items: center;
    fill: #8f8f8f;
    gap: 39px;
    padding-left: 17px;
    padding-right: 21px;
    margin: 3px 0 5px;
    border-right: 2px solid #3f3f3f;
}
.tl-group svg {
    width: 24px;
    height: 24px;
    flex: none;
}
.tl-group.second {
    padding-left: 22px;
    gap: 32px;
    padding-right: 33px;
    margin: 0;
}
.tl-group.second svg:first-child {
    width: 34px;
    height: 26px;
}
.tl-body {
    flex: 1;
    min-height: 0;
    display: flex;
    justify-content: center;
    align-items: center;
    gap: 3px;
}
.tl-button,
.tl-arrow {
    height: 48px;
    display: flex;
    justify-content: center;
    align-items: center;
    background: #414141;
    border: 2px solid #5b5b5b;
    border-radius: 4px;
    font-size: 20.5px;
    color: #eee;
}
.tl-button {
    width: 280px;
}
.tl-arrow {
    width: 36px;
}
.tl-arrow svg {
    width: 18px;
    height: 13px;
}
.tl-footer {
    height: 42px;
    flex: none;
    display: flex;
    border-bottom: 2px solid #3a3a3a;
    background: #4b4b4b;
}
.tl-foot-left {
    width: 527px;
    display: flex;
    align-items: center;
    gap: 2px;
    padding-left: 12px;
    background: #535353;
    border-top: 2px solid #3f3f3f;
    border-right: 1px solid #3f3f3f;
}
.framebox {
    width: 10px;
    height: 16px;
    border: 2px solid #8f8f8f;
}
.tl-share {
    width: 26px;
    height: 32px;
    margin-left: 27px;
    fill: #8f8f8f;
}
.tl-foot-right {
    flex: 1;
    display: flex;
    align-items: center;
    padding-left: 22px;
}
.mount {
    fill: #8f8f8f;
    flex: none;
}
.mount.small {
    width: 20px;
    height: 14px;
    margin-top: 6px;
}
.slider {
    width: 156px;
    height: 5px;
    margin: 0 32px 6px 41px;
    background: #777;
}
.mount.big {
    width: 32px;
    height: 18px;
    margin-top: 6px;
}

/* collapsed docks */
.dockmid {
    width: 84px;
    flex: none;
    border-left: 3px solid #3f3f3f;
    border-right: 3px solid #3f3f3f;
}
.dockhead {
    height: 23px;
    background: #434343;
    padding-right: 14px;
    text-align: right;
    font-size: 24px;
    line-height: 20px;
    color: #ccc;
}
.dock {
    width: 236px;
    flex: none;
}
.dockgroup {
    padding: 7px 0 4px;
    border-bottom: 2px solid #3d3d3d;
}
.dockgroup.g-a { height: 250px; }
.dockgroup.g-b { height: 250px; padding-top: 9px; }
.dockgroup.g-c { height: 137px; }
.dockgroup .grip {
    margin-bottom: 4px;
}
.dockitem {
    height: 56px;
    margin: 0 10px;
    padding-left: 9px;
    display: flex;
    align-items: center;
    gap: 19px;
    border-top: 4px solid transparent;
    border-bottom: 4px solid transparent;
    font-size: 21px;
    font-weight: 600;
    color: #eee;
    background-clip: padding-box;
}
.dockitem svg {
    width: 36px;
    height: 36px;
    flex: none;
    fill: #dcdcdc;
    color: #dcdcdc;
}
.dimicon svg {
    fill: #999;
    color: #999;
}
.dockitem.active {
    background-color: #383838;
    border-radius: 3px;
}

/* floating layers panel */
.layers {
    position: absolute;
    left: 2119px;
    top: 178px;
    width: 522px;
    height: 1605px;
    display: flex;
    flex-direction: column;
    background: #535353;
    box-shadow: 0 2px 12px rgba(0, 0, 0, 0.45);
}
.layers-top {
    height: 8px;
    flex: none;
    background: #3a3a3a;
}
.layers-tabs {
    height: 56px;
    flex: none;
    display: flex;
    background: #434343;
    border-bottom: 2px solid #393939;
}
.ltab {
    width: 97px;
    flex: none;
    overflow: hidden;
    white-space: nowrap;
    padding-left: 18px;
    line-height: 52px;
    font-size: 21px;
    font-weight: 600;
    color: #b4b4b4;
    border-right: 1px solid #393939;
}
.ltab.cur {
    width: 104px;
    height: 57px;
    background: #535353;
    color: #fff;
}
.ltab-end {
    flex: 1;
    display: flex;
    align-items: center;
    justify-content: flex-end;
    gap: 10px;
    padding-right: 11px;
}
.ltab-end svg {
    width: 20px;
    height: 20px;
}
.more-tabs {
    font-size: 30px;
    line-height: 1;
    margin: -6px 9px 0 0;
    color: #ddd;
}
.ltab-bar {
    width: 1px;
    height: 24px;
    background: #888;
}
.lrow {
    flex: none;
    display: flex;
    align-items: center;
    padding-left: 7px;
    border-bottom: 2px solid #3f3f3f;
    font-size: 20px;
}
.r1 { height: 62px; padding-top: 9px; }
.r2 { height: 56px; padding-top: 4px; }
.r3 { height: 62px; padding-bottom: 4px; border-bottom: 0; }

.field {
    height: 38px;
    display: flex;
    align-items: center;
    background: #454545;
    border: 2px solid #5c5c5c;
    border-radius: 4px;
    color: #e4e4e4;
    position: relative;
}
.fchev {
    width: 13px;
    height: 10px;
    color: #ddd;
    flex: none;
}
.field > .fchev {
    margin-left: auto;
    margin-right: 7px;
}
.kind {
    width: 176px;
    padding-left: 15px;
    gap: 7px;
    margin-right: 19px;
}
.kind-icon {
    width: 20px;
    height: 24px;
}
.lic {
    width: 26px;
    height: 26px;
    margin-right: 22px;
    flex: none;
}
.filter-toggle {
    width: 19px;
    height: 36px;
    border: 2px solid #6a6a6a;
    border-radius: 10px;
    margin-left: 1px;
}
.filter-toggle span {
    display: block;
    width: 17px;
    height: 17px;
    margin: -2px 0 0 -1px;
    border-radius: 50%;
    background: #ddd;
}
.blend {
    width: 262px;
    padding-left: 14px;
}
.lab {
    color: #c4c4c4;
}
.r2 .lab {
    margin: 0 5px 0 8px;
    width: 80px;
}
.pct {
    width: 103px;
    padding-left: 6px;
}
.pct span {
    width: 66px;
}
.pct i {
    height: 100%;
    flex: 1;
    display: flex;
    justify-content: center;
    align-items: center;
    border-left: 2px solid #5c5c5c;
}
.lab.lock {
    width: 66px;
    padding-left: 3px;
}
.lk {
    width: 24px;
    height: 32px;
    margin-right: 20px;
    flex: none;
}
.lab.fill {
    margin-left: 32px;
    margin-right: 6px;
}
.layerlist {
    flex: 1;
    min-height: 0;
    background: #4d4d4d;
}
.layerrow {
    width: 491px;
    height: 83px;
    display: flex;
    align-items: center;
    background: linear-gradient(90deg, #4d4d4d 61px, #6a6a6a 61px);
}
.eye {
    width: 26px;
    height: 24px;
    margin: 0 22px 0 18px;
    flex: none;
}
.thumb {
    width: 72px;
    height: 72px;
    padding: 5px;
    /* the four white corner brackets of the selected thumbnail */
    background:
        linear-gradient(#fff, #fff) 0 0 / 24px 2px no-repeat,
        linear-gradient(#fff, #fff) 0 0 / 2px 24px no-repeat,
        linear-gradient(#fff, #fff) 100% 0 / 24px 2px no-repeat,
        linear-gradient(#fff, #fff) 100% 0 / 2px 24px no-repeat,
        linear-gradient(#fff, #fff) 0 100% / 24px 2px no-repeat,
        linear-gradient(#fff, #fff) 0 100% / 2px 24px no-repeat,
        linear-gradient(#fff, #fff) 100% 100% / 24px 2px no-repeat,
        linear-gradient(#fff, #fff) 100% 100% / 2px 24px no-repeat;
}
.thumb canvas {
    display: block;
    width: 62px;
    height: 62px;
    border: 2px solid #333;
}
.layername {
    margin-left: 12px;
    font-size: 20px;
    color: #e8e8e8;
}
.layers-foot {
    height: 50px;
    flex: none;
    display: flex;
    justify-content: flex-end;
    align-items: center;
    gap: 24px;
    padding-right: 52px;
    border-top: 2px solid #3f3f3f;
    border-bottom: 4px solid #3f3f3f;
}
.layers-foot svg {
    width: 30px;
    height: 30px;
    flex: none;
}
.fx {
    width: 30px;
    font-family: "Liberation Serif", serif;
    font-style: italic;
    font-size: 28px;
    text-align: center;
    color: #ddd;
}
.layers-grip {
    height: 15px;
    flex: none;
    border-bottom: 2px solid #3a3a3a;
}
.layers-grip .grip {
    width: 30px;
    height: 8px;
    margin-top: 2px;
}

/* pasted crop */
.paste {
    position: absolute;
    left: 38px;
    top: 7px;
    width: 757px;
    height: 851px;
    overflow: hidden;
    display: flex;
    flex-direction: column;
    background: #535353;
}
.p-menubar {
    height: 40px;
    flex: none;
    display: flex;
    align-items: center;
    gap: 33px;
    background: linear-gradient(90deg, #6a3a20, #8b3618 60%, #993516);
    border-bottom: 1px solid #2b1a14;
    font-family: Roboto, sans-serif;
    font-size: 21.6px;
    color: #fff;
    position: relative;
}
.p-ct {
    width: 28px;
    margin-right: -33px;
}
.p-filter {
    height: 38px;
    width: 94px;
    flex: none;
    display: flex;
    justify-content: center;
    align-items: center;
    margin-right: -23px;
    background: rgba(255, 255, 255, 0.22);
    border-radius: 5px;
}
.p-sync {
    width: 32px;
    height: 30px;
    margin-left: -3px;
}
.p-title {
    height: 35px;
    flex: none;
    padding-left: 515px;
    border-bottom: 2px solid #3d3d3d;
    font-family: Roboto, sans-serif;
    font-size: 22px;
    line-height: 39px;
    color: #ddd;
    background: #535353;
    box-sizing: content-box;
}
.p-opts {
    height: 52px;
    flex: none;
    display: flex;
    align-items: center;
    border-bottom: 1px solid #3d3d3d;
}
.p-first {
    width: 18px;
    height: 24px;
}
.p-icons {
    display: flex;
    gap: 12px;
    margin-left: 491px;
    color: #8c8c8c;
}
.p-icons svg {
    width: 30px;
    height: 30px;
}
.p-tabs {
    height: 47px;
    flex: none;
    background: #424242;
    font-size: 20px;
    font-weight: 600;
    line-height: 46px;
    color: #eee;
}
.p-ruler {
    height: 30px;
    flex: none;
    display: flex;
    padding-left: 552px;
    background: #535353;
}
.p-ruler span {
    width: 63px;
    flex: none;
    border-left: 1px solid #777;
    padding-left: 3px;
    font-size: 17px;
    line-height: 26px;
    color: #a8a8a8;
}
.p-dark {
    height: 75px;
    flex: none;
    background: #282828;
}
.grass {
    display: block;
    width: 757px;
    height: 570px;
    flex: none;
    image-rendering: pixelated;
}

.menu {
    position: absolute;
    left: 28px;
    top: 40px;
    width: 486px;
    height: 671px;
    padding: 7px 8px;
    border-radius: 12px;
    background: linear-gradient(180deg, #bab5b1 0, #b2adaa 130px, #acaaa0 200px, #afc092 280px, #b7cf96 340px);
    box-shadow: 0 2px 8px rgba(0, 0, 0, 0.25);
    font-family: Roboto, sans-serif;
    font-size: 21.6px;
    color: #1e1e1e;
}
.mi {
    height: 28.7px;
    display: flex;
    justify-content: space-between;
    align-items: center;
    padding-left: 29px;
    padding-right: 28px;
    white-space: nowrap;
}
.menu hr {
    height: 2px;
    margin: 7.8px 14px;
    border: 0;
    background: #9a9692;
}
.menu hr.wide-sep {
    margin: 12px 22px 14px;
    background: #a0b285;
}
kbd {
    font-family: Roboto, "DejaVu Sans", sans-serif;
    font-size: 21px;
    letter-spacing: 1px;
}
.mi.sub {
    padding-right: 19px;
}
.mi.sub b {
    font-weight: normal;
    font-size: 28px;
    line-height: 28px;
    margin-top: -3px;
}
.mi.open {
    background: #a2b581;
    border-radius: 6px;
}

.submenu {
    position: absolute;
    left: 506px;
    top: 666px;
    width: 244px;
    height: 190px;
    padding-top: 8px;
    border-radius: 12px;
    background: #b4cc93;
    box-shadow: 0 2px 8px rgba(0, 0, 0, 0.25);
    font-family: Roboto, sans-serif;
    font-size: 21.6px;
    color: #1e1e1e;
}
.si {
    height: 28.7px;
    margin: 0 8px;
    padding-left: 29px;
    display: flex;
    align-items: center;
    border-radius: 5px;
}
.si.hot {
    margin-left: 18px;
    padding-left: 19px;
    background: #427fe8;
    color: #fff;
}
.ring {
    position: absolute;
    left: 515px;
    top: 683px;
    width: 184px;
    height: 67px;
    border: 11px solid #fdf548;
    border-radius: 30px;
}
```

FILE: script.js
```js
// small seeded random so the noise stays the same on every load
let seed = 1337;
let rand = () => {
    seed = (seed * 16807) % 2147483647;
    return seed / 2147483647;
};

let greys = [
    ["#8a8c89", 29], ["#7e7f80", 25], ["#949793", 16], ["#757478", 13],
    ["#9ea29e", 6], ["#6b686f", 7], ["#5e596a", 4],
];
let greens = [
    ["#6e9750", 30], ["#7ba35b", 28], ["#628a48", 20], ["#86b066", 10],
    ["#507638", 6], ["#93c070", 3], ["#47672f", 3],
];

let pick = (palette) => {
    let total = palette.reduce((s, p) => s + p[1], 0);
    let r = rand() * total;
    for (let i = 0; i < palette.length; i++) {
        r -= palette[i][1];
        if (r <= 0) return palette[i][0];
    }
    return palette[0][0];
};

// cells now and then repeat a neighbour, which gives the small clusters
let paint = (id, palette, clump) => {
    let c = document.getElementById(id);
    let ctx = c.getContext("2d");
    let prev = [];
    for (let y = 0; y < c.height; y++) {
        let row = [];
        for (let x = 0; x < c.width; x++) {
            let r = rand();
            let col;
            if (x > 0 && r < clump) col = row[x - 1];
            else if (y > 0 && r < clump * 2) col = prev[x];
            else col = pick(palette);
            row.push(col);
            ctx.fillStyle = col;
            ctx.fillRect(x, y, 1, 1);
        }
        prev = row;
    }
};

paint("image", greys, 0.06);
paint("thumb", greys, 0);
paint("grass", greens, 0.12);
```
